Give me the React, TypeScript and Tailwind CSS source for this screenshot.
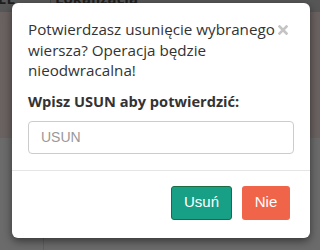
const App = () => {
  return (
    <div className="relative w-[320px] h-[250px] overflow-hidden bg-[#6b6b6b] font-['Open_Sans',sans-serif]">
      {/* page behind the overlay */}
      <div className="h-[12px] bg-[#575757] flex items-start text-[#1f1f1f] text-[15px] font-bold leading-[15px] overflow-hidden">
        <span className="w-[52px] -mt-[9px] -ml-[2px]">EL</span>
        <span className="border-l border-[#444] h-full"></span>
        <span className="pl-[4px] -mt-[9px]">Lokalizacja</span>
      </div>
      <div className="h-[126px] bg-[#6a6261]"></div>
      <div className="h-[112px] flex">
        <div className="w-[44px] border-r border-[#5f5f5f]"></div>
      </div>

      {/* modal */}
      <div className="absolute left-[12px] top-[3px] w-[298px] h-[235px] bg-white rounded-[6px] shadow-[0_3px_9px_rgba(0,0,0,0.5)]">
        <div className="px-4 pt-4 pb-4">
          <div className="flex justify-between">
            <p className="text-[15.2px] leading-[20.5px] text-[#333] whitespace-nowrap">
              Potwierdzasz usunięcie wybranego
              <br />
              wiersza? Operacja będzie
              <br />
              nieodwracalna!
            </p>
            <svg width="10" height="10" viewBox="0 0 10 10" className="mt-[6px] mr-[6px] shrink-0">
              <path d="M1.5 1.5 L8.5 8.5 M8.5 1.5 L1.5 8.5" stroke="#c4c4c4" strokeWidth="2.6" strokeLinecap="square" />
            </svg>
          </div>
          <p className="mt-[10px] text-[14.6px] leading-[20px] font-bold text-[#333]">
            Wpisz USUN aby potwierdzić:
          </p>
          <input
            type="text"
            placeholder="USUN"
            className="mt-[10px] block w-full h-[33px] border border-[#cccccc] rounded-[4px] px-3 text-[14px] font-['Liberation_Sans',sans-serif] placeholder:text-[#999] outline-none"
          />
        </div>
        <div className="border-t border-[#e5e5e5] flex justify-end gap-[10px] pt-[15px] pr-[20px]">
          <button className="h-[34px] w-[61px] bg-[#17a085] border border-[#1b6b43] rounded-[3px] text-white text-[15px] font-['Liberation_Sans',sans-serif]">
            Usuń
          </button>
          <button className="h-[34px] w-[48px] bg-[#f0654a] rounded-[3px] text-white text-[15px] font-['Liberation_Sans',sans-serif]">
            Nie
          </button>
        </div>
      </div>
    </div>
  );
};

export default App;
